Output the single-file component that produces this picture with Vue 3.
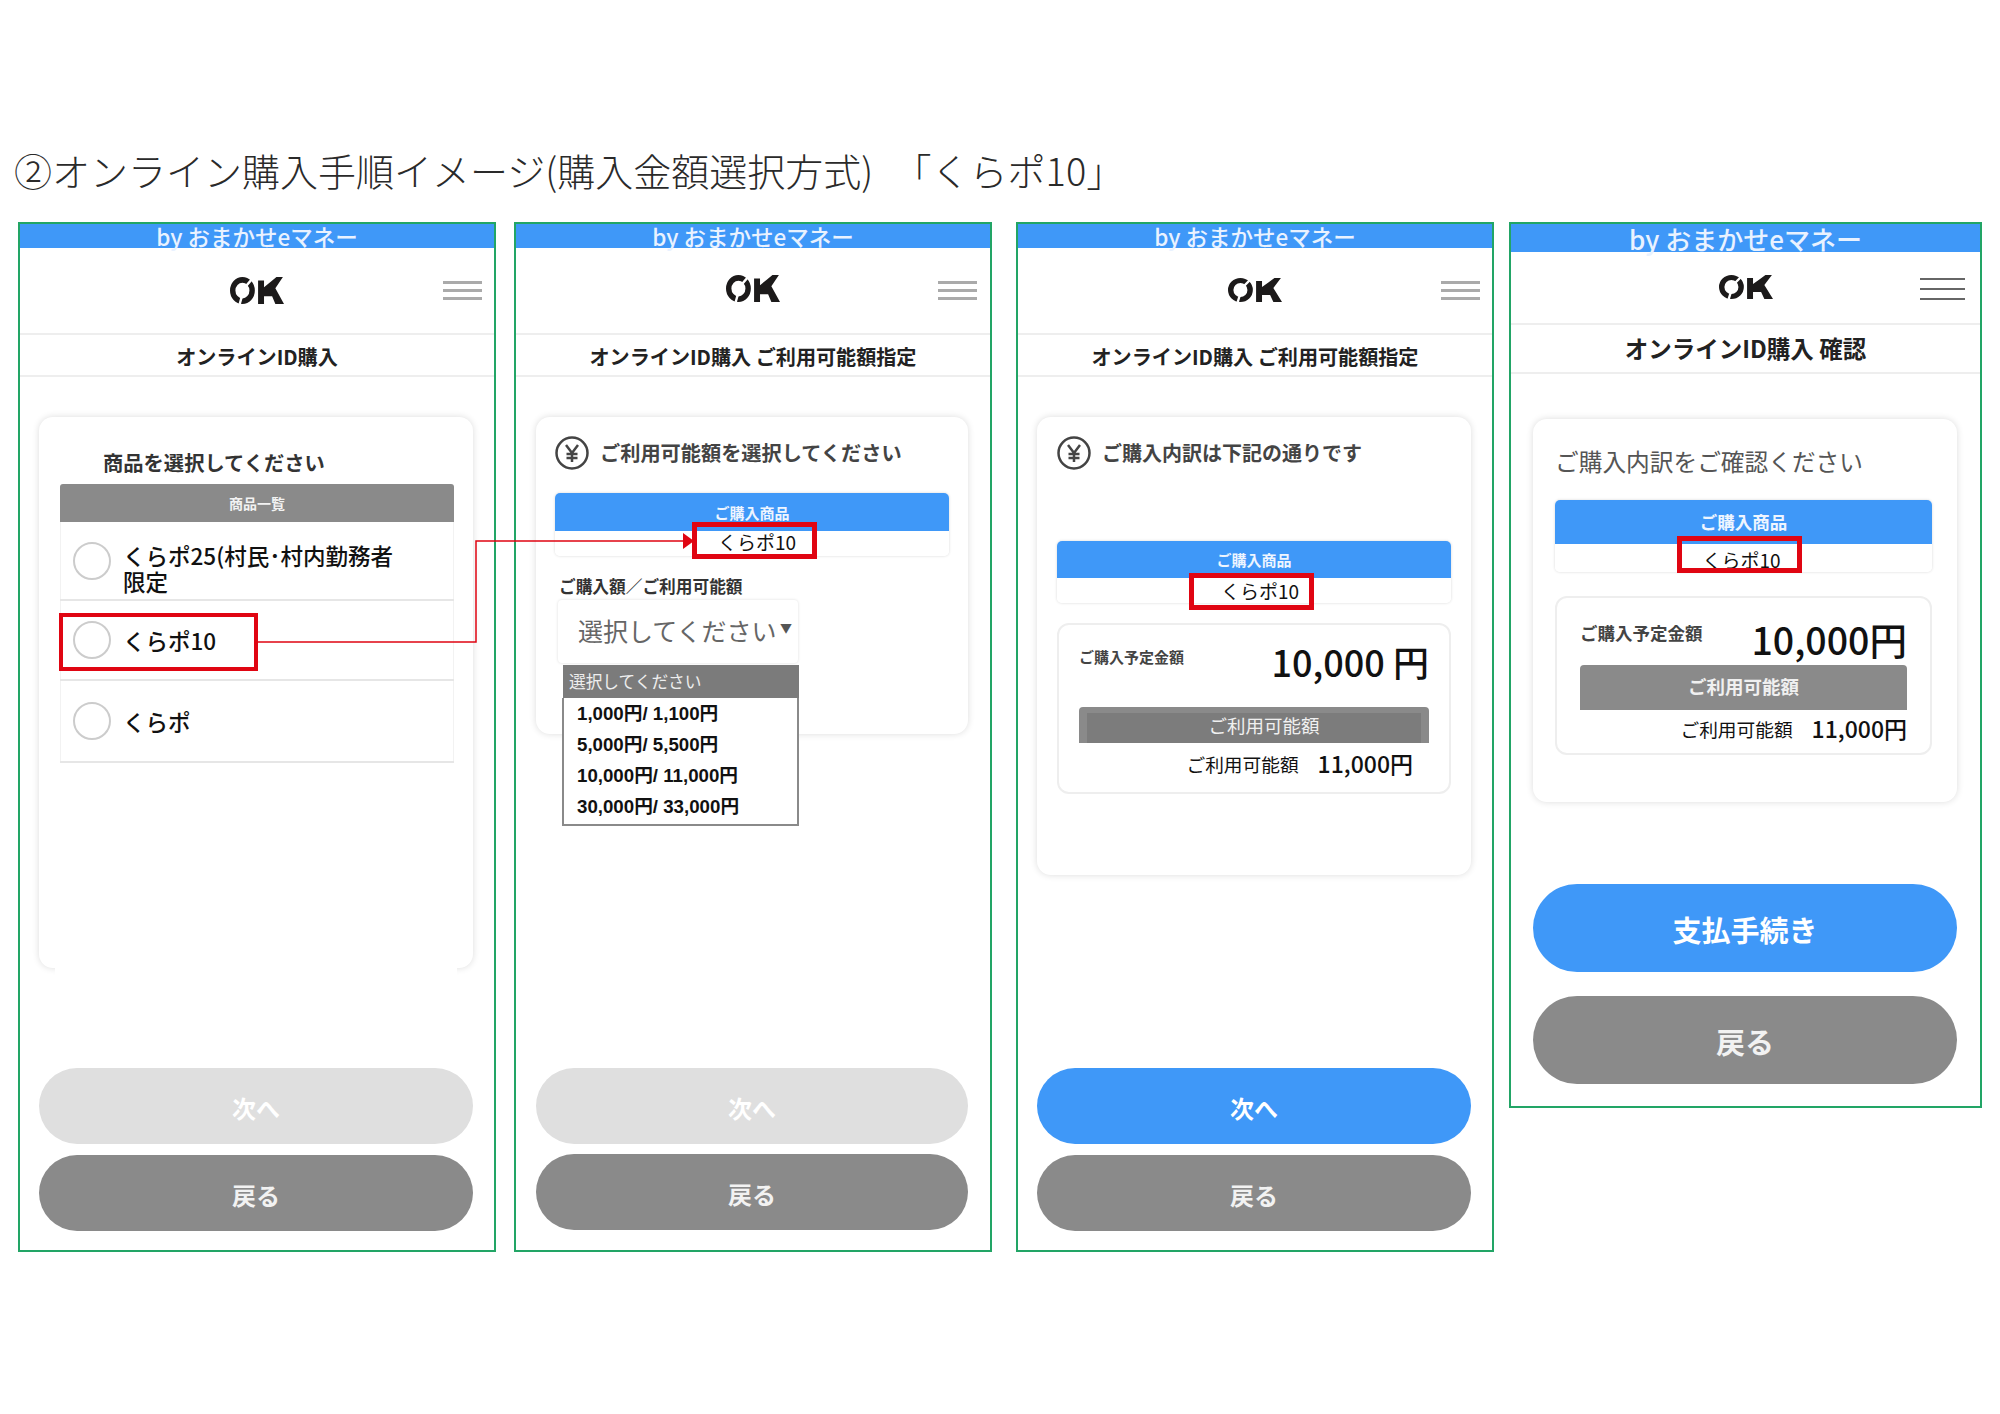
<script setup>
const products = [
  { id: 'a', lines: ['くらポ25(村民･村内勤務者', '限定'], cls: 'tall' },
  { id: 'b', lines: ['くらポ10'], cls: 'picked' },
  { id: 'c', lines: ['くらポ'], cls: '' },
]
const options = ['1,000円/ 1,100円', '5,000円/ 5,500円', '10,000円/ 11,000円', '30,000円/ 33,000円']
</script>

<template>
  <main class="page">
    <h1 class="headline">②オンライン購入手順イメージ(購入金額選択方式) 「くらポ10」</h1>

    <div class="screens">
      <!-- 1 -->
      <section class="phone p1">
        <div class="band">by おまかせeマネー</div>
        <header class="head">
          <svg class="logo" viewBox="0 0 50 24" preserveAspectRatio="none"><ellipse class="logo-ring" cx="11.500" cy="12" rx="9" ry="9.500" /><path class="logo-gap" d="M14 9L22 0M11 17L9 24" /><path class="logo-k" d="M26 24V3h5.500v6L38 4l5-4h6l-7 10 8 14h-8l-3-7h-7.500v7z" /></svg>
          <span class="burger"><i></i><i></i><i></i></span>
        </header>
        <div class="bar">オンラインID購入</div>
        <div class="body">
          <div class="card card-list">
            <h2 class="pick-title">商品を選択してください</h2>
            <div class="list-head">商品一覧</div>
            <div v-for="p in products" :key="p.id" class="row" :class="p.cls">
              <span class="radio"></span>
              <span class="row-text"><span v-for="l in p.lines" :key="l" class="row-line">{{ l }}</span></span>
            </div>
          </div>
          <div class="actions">
            <button class="btn off">次へ</button>
            <button class="btn back">戻る</button>
          </div>
        </div>
      </section>

      <!-- 2 -->
      <section class="phone p2">
        <div class="band">by おまかせeマネー</div>
        <header class="head">
          <svg class="logo" viewBox="0 0 50 24" preserveAspectRatio="none"><ellipse class="logo-ring" cx="11.500" cy="12" rx="9" ry="9.500" /><path class="logo-gap" d="M14 9L22 0M11 17L9 24" /><path class="logo-k" d="M26 24V3h5.500v6L38 4l5-4h6l-7 10 8 14h-8l-3-7h-7.500v7z" /></svg>
          <span class="burger"><i></i><i></i><i></i></span>
        </header>
        <div class="bar">オンラインID購入 ご利用可能額指定</div>
        <div class="body">
          <div class="card card-select">
            <div class="lead">
              <svg class="yen" viewBox="0 0 34 34"><circle cx="17" cy="17" r="15.500" /><path d="M11 9l6 8 6-8M17 17v9M11.500 18h11M11.500 22h11" /></svg>
              <h2>ご利用可能額を選択してください</h2>
            </div>
            <div class="item item-select">
              <div class="item-head">ご購入商品</div>
              <div class="item-value"><span class="red-box"></span>くらポ10</div>
            </div>
            <div class="field-label">ご購入額／ご利用可能額</div>
            <div class="select">選択してください<span class="caret">▼</span></div>
            <div class="menu">
              <div class="menu-head">選択してください</div>
              <div class="menu-items">
                <div v-for="o in options" :key="o" class="menu-item">{{ o }}</div>
              </div>
            </div>
          </div>
          <div class="actions">
            <button class="btn off">次へ</button>
            <button class="btn back">戻る</button>
          </div>
        </div>
      </section>

      <!-- 3 -->
      <section class="phone p3">
        <div class="band">by おまかせeマネー</div>
        <header class="head">
          <svg class="logo" viewBox="0 0 50 24" preserveAspectRatio="none"><ellipse class="logo-ring" cx="11.500" cy="12" rx="9" ry="9.500" /><path class="logo-gap" d="M14 9L22 0M11 17L9 24" /><path class="logo-k" d="M26 24V3h5.500v6L38 4l5-4h6l-7 10 8 14h-8l-3-7h-7.500v7z" /></svg>
          <span class="burger"><i></i><i></i><i></i></span>
        </header>
        <div class="bar">オンラインID購入 ご利用可能額指定</div>
        <div class="body">
          <div class="card card-summary">
            <div class="lead">
              <svg class="yen" viewBox="0 0 34 34"><circle cx="17" cy="17" r="15.500" /><path d="M11 9l6 8 6-8M17 17v9M11.500 18h11M11.500 22h11" /></svg>
              <h2>ご購入内訳は下記の通りです</h2>
            </div>
            <div class="item">
              <div class="item-head">ご購入商品</div>
              <div class="item-value"><span class="red-box"></span>くらポ10</div>
            </div>
            <div class="amount">
              <div class="amount-top">
                <span class="amount-label">ご購入予定金額</span>
                <span class="amount-num">10,000 円</span>
              </div>
              <div class="avail-head"><span class="avail-inner">ご利用可能額</span></div>
              <div class="avail-row"><span>ご利用可能額</span><b>11,000円</b></div>
            </div>
          </div>
          <div class="actions">
            <button class="btn go">次へ</button>
            <button class="btn back">戻る</button>
          </div>
        </div>
      </section>

      <!-- 4 -->
      <section class="phone p4">
        <div class="band">by おまかせeマネー</div>
        <header class="head">
          <svg class="logo" viewBox="0 0 50 24" preserveAspectRatio="none"><ellipse class="logo-ring" cx="11.500" cy="12" rx="9" ry="9.500" /><path class="logo-gap" d="M14 9L22 0M11 17L9 24" /><path class="logo-k" d="M26 24V3h5.500v6L38 4l5-4h6l-7 10 8 14h-8l-3-7h-7.500v7z" /></svg>
          <span class="burger"><i></i><i></i><i></i></span>
        </header>
        <div class="bar">オンラインID購入 確認</div>
        <div class="body">
          <div class="card card-confirm">
            <h2 class="confirm-title">ご購入内訳をご確認ください</h2>
            <div class="item">
              <div class="item-head">ご購入商品</div>
              <div class="item-value"><span class="red-box"></span>くらポ10</div>
            </div>
            <div class="amount">
              <div class="amount-top">
                <span class="amount-label">ご購入予定金額</span>
                <span class="amount-num">10,000円</span>
              </div>
              <div class="avail-head">ご利用可能額</div>
              <div class="avail-row"><span>ご利用可能額</span><b>11,000円</b></div>
            </div>
          </div>
          <div class="actions">
            <button class="btn go">支払手続き</button>
            <button class="btn back">戻る</button>
          </div>
        </div>
      </section>
    </div>

    <svg class="connector" viewBox="0 0 2000 1414">
      <path class="wire" d="M257 642H476V541H684" />
      <path class="tip" d="M683 533l11 8-11 8z" />
    </svg>
  </main>
</template>

<style>
html, body { background: #fff; }
</style>

<style scoped>
.page {
  position: relative;
  width: 2000px;
  height: 1414px;
  background: #fff;
  font-family: "Noto Sans CJK JP", "Noto Sans", sans-serif;
  color: #222;
  overflow: hidden;
}
.headline {
  margin: 0;
  padding: 142px 0 0 14px;
  height: 222px;
  box-sizing: border-box;
  font-size: 38px;
  line-height: 56px;
  font-weight: 300;
  word-spacing: 12px;
  color: #2a2a2a;
  white-space: nowrap;
}
.screens { display: flex; align-items: flex-start; padding-left: 18px; }

.phone {
  box-sizing: border-box;
  width: 478px;
  height: 1030px;
  border: 2px solid #22a566;
  display: flex;
  flex-direction: column;
  background: #fff;
}
.p2 { margin-left: 18px; }
.p3 { margin-left: 24px; }
.p4 { margin-left: 15px; width: 473px; height: 886px; }

.band {
  height: 24px;
  background: #3f98f8;
  color: #e9f2ff;
  font-size: 22.500px;
  line-height: 24px;
  font-weight: 500;
  text-align: center;
  flex: none;
}
.p4 .band { height: 28px; line-height: 29px; font-size: 26px; }

.head {
  position: relative;
  height: 87px;
  flex: none;
  display: flex;
  align-items: center;
  justify-content: center;
  border-bottom: 2px solid #eee;
  box-sizing: border-box;
}
.p4 .head { height: 73px; }
.logo { width: 54px; height: 27px; margin-top: -1px; }
.p2 .logo { margin-top: -5px; }
.p3 .logo, .p4 .logo { width: 54px; height: 24px; }
.logo-ring { fill: none; stroke: #1c1a1a; stroke-width: 5; }
.logo-gap { fill: none; stroke: #fff; stroke-width: 2.200; }
.logo-k { fill: #1c1a1a; }

.burger {
  position: absolute;
  right: 12px;
  top: 33px;
  width: 39px;
  display: flex;
  flex-direction: column;
  gap: 5px;
}
.burger i { display: block; height: 3px; background: #aaa; }
.p2 .burger { right: 13px; }
.p4 .burger { width: 45px; right: 15px; top: 26px; gap: 8px; }
.p4 .burger i { height: 2px; background: #666; }

.bar {
  height: 42px;
  flex: none;
  box-sizing: border-box;
  border-bottom: 2px solid #eee;
  text-align: center;
  font-size: 20.100px;
  line-height: 44px;
  font-weight: 700;
  color: #222;
  white-space: nowrap;
}
.p4 .bar { height: 49px; font-size: 23.500px; line-height: 46px; }

.body {
  flex: 1;
  display: flex;
  flex-direction: column;
  padding: 40px 21px 19px 19px;
  min-height: 0;
}
.p2 .body { padding: 40px 22px 20px 20px; }
.p4 .body { padding: 45px 23px 22px 22px; }

.card {
  position: relative;
  box-sizing: border-box;
  background: #fff;
  border-radius: 14px;
  box-shadow: 0 0 7px rgba(0, 0, 0, 0.14);
  flex: none;
}

/* screen 1 */
.card-list { height: 551px; padding: 28px 19px 0 21px; }
.card-list::after {
  content: "";
  position: absolute;
  left: 16px;
  right: 16px;
  bottom: -10px;
  height: 12px;
  background: #fff;
}
.pick-title {
  margin: 0 0 5px 43px;
  font-size: 20.300px;
  line-height: 34px;
  font-weight: 700;
  color: #333;
}
.list-head {
  height: 38px;
  background: #8a8a8a;
  border-radius: 3px 3px 0 0;
  color: #f2f2f2;
  text-align: center;
  font-size: 14px;
  line-height: 38px;
  font-weight: 700;
}
.row {
  position: relative;
  box-sizing: border-box;
  height: 80px;
  display: flex;
  align-items: center;
  gap: 12px;
  padding-left: 13px;
  border-bottom: 2px solid #e6e6e6;
  box-shadow: inset 1px 0 0 #f2f2f2, inset -1px 0 0 #f2f2f2;
}
.row.tall { height: 79px; }
.row.tall .row-text { margin-top: 15px; }
.row:last-child { height: 82px; }
.radio {
  box-sizing: border-box;
  width: 38px;
  height: 38px;
  border: 2px solid #ccc;
  border-radius: 50%;
  flex: none;
}
.row-text { display: flex; flex-direction: column; }
.row-line { font-size: 22.500px; line-height: 26px; font-weight: 500; color: #111; white-space: nowrap; }
.row.picked::after {
  content: "";
  position: absolute;
  left: -1px;
  top: 12px;
  width: 199px;
  height: 58px;
  box-sizing: border-box;
  border: 4px solid #e00512;
}

/* lead lines with yen icon */
.lead { display: flex; align-items: center; gap: 11px; }
.lead h2 { margin: 0; font-size: 20.200px; line-height: 34px; font-weight: 700; color: #444; white-space: nowrap; }
.yen { width: 34px; height: 34px; flex: none; }
.yen circle { fill: none; stroke: #444; stroke-width: 2.500; }
.yen path { fill: none; stroke: #444; stroke-width: 2.500; }

/* purchased item block */
.item {
  position: relative;
  border-radius: 5px;
  box-shadow: 0 0 3px rgba(0, 0, 0, 0.16);
}
.item-head {
  height: 38px;
  border-radius: 5px 5px 0 0;
  background: #3f98f8;
  color: #eef5ff;
  text-align: center;
  font-size: 15px;
  line-height: 40px;
  font-weight: 700;
}
.item-value {
  position: relative;
  height: 25px;
  background: #fff;
  border-radius: 0 0 5px 5px;
  text-align: center;
  font-size: 19px;
  line-height: 25px;
  color: #111;
}
.red-box {
  position: absolute;
  left: 50%;
  top: -8px;
  width: 125px;
  height: 37px;
  margin-left: -63px;
  box-sizing: border-box;
  border: 5px solid #e00512;
}

/* screen 2 */
.card-select { height: 317px; padding: 19px 19px 0; }
.item-select { margin-top: 23px; }
.item-select .item-value { padding-left: 10px; line-height: 22px; }
.item-select .red-box { margin-left: -60px; top: -9px; }
.field-label { margin: 19px 0 0 4px; font-size: 16.700px; line-height: 22px; font-weight: 700; color: #333; }
.select {
  position: relative;
  box-sizing: border-box;
  width: 240px;
  height: 63px;
  margin: 3px 0 0 3px;
  padding-left: 20px;
  border-radius: 4px;
  box-shadow: 0 0 3px rgba(0, 0, 0, 0.14);
  color: #666;
  font-size: 25px;
  line-height: 60px;
  white-space: nowrap;
}
.caret { position: absolute; right: 6px; top: 0; font-size: 12px; line-height: 56px; color: #555; }
.menu { position: absolute; left: 26px; top: 248px; width: 237px; z-index: 2; }
.menu-head {
  height: 33px;
  margin-left: 1px;
  background: #7b7b7b;
  color: #eee;
  font-size: 16.700px;
  line-height: 33px;
  padding-left: 6px;
}
.menu-items {
  box-sizing: border-box;
  height: 128px;
  background: #fff;
  border: 2px solid #8a8a8a;
  border-top: 0;
}
.menu-item {
  height: 31px;
  padding-left: 13px;
  font-family: "Liberation Sans", "Noto Sans CJK JP", sans-serif;
  font-size: 18.700px;
  line-height: 31px;
  font-weight: 700;
  color: #111;
  white-space: nowrap;
}

/* screens 3 and 4 */
.card-summary { height: 458px; padding: 19px 20px 0; }
.p3 .lead h2 { font-size: 20px; }
.p3 .item { margin-top: 71px; }
.p3 .item-head { height: 37px; line-height: 38px; }
.p3 .item-value { padding-left: 12px; }
.p3 .red-box { margin-left: -65px; top: -5px; height: 37px; }
.amount {
  box-sizing: border-box;
  margin-top: 20px;
  border: 2px solid #eee;
  border-radius: 12px;
  padding: 0 20px;
}
.p3 .amount { height: 171px; padding: 0 20px; }
.amount-top { display: flex; align-items: flex-start; justify-content: space-between; height: 82px; }
.amount-label { margin-top: 18px; font-size: 15px; line-height: 28px; font-weight: 700; color: #444; }
.amount-num {
  margin-top: 9px;
  font-size: 36px;
  line-height: 54px;
  font-weight: 500;
  color: #111;
  white-space: nowrap;
}
.avail-head {
  height: 36px;
  margin-top: 0;
  box-sizing: border-box;
  padding: 8px 8px 0;
  background: #8a8a8a;
  border-radius: 4px 4px 0 0;
  color: #f0f0f0;
  text-align: center;
  font-size: 18.500px;
  line-height: 24px;
}
.avail-inner { display: block; margin: -2px 0 0; background: #7c7c7c; height: 30px; padding-left: 6%; }
.avail-row {
  display: flex;
  justify-content: flex-end;
  align-items: center;
  gap: 19px;
  height: 40px;
  padding-right: 16px;
  font-size: 18.700px;
  color: #111;
}
.avail-row b { font-size: 23px; font-weight: 500; }

.card-confirm { height: 383px; padding: 24px 25px 0 22px; }
.confirm-title { margin: 0 0 21px 0; font-size: 23.700px; line-height: 36px; font-weight: 400; color: #555; white-space: nowrap; }
.p4 .item-head { height: 44px; line-height: 44px; font-size: 17.500px; }
.p4 .item-value { height: 28px; line-height: 31px; padding-right: 4px; }
.p4 .red-box { top: -8px; height: 37px; margin-left: -67px; }
.p4 .amount { margin-top: 24px; height: 159px; padding: 0 23px; }
.p4 .amount-top { height: 67px; }
.p4 .amount-label { margin-top: 21px; font-size: 17.500px; }
.p4 .amount-num { margin-top: 14px; font-size: 37.500px; }
.p4 .avail-head { height: 45px; padding-top: 9px; font-weight: 700; font-size: 18.500px; }
.p4 .avail-row { height: 36px; padding-right: 0; }

/* buttons */
.actions { margin-top: auto; display: flex; flex-direction: column; gap: 11px; }
.p2 .actions { gap: 10px; }
.btn {
  display: block;
  width: 100%;
  height: 76px;
  border: 0;
  border-radius: 38px;
  padding: 2px 0 0;
  color: #fff;
  font-family: inherit;
  font-size: 24px;
  font-weight: 700;
}
.off { background: #dfdfdf; }
.back { background: #8a8a8a; color: #f2f2f2; }
.go { background: #3f98f8; }
.p4 .actions { gap: 24px; }
.p4 .btn { height: 88px; border-radius: 44px; font-size: 29px; }

.connector { position: absolute; left: 0; top: 0; width: 2000px; height: 1414px; pointer-events: none; }
.wire { fill: none; stroke: #e00512; stroke-width: 1.500; }
.tip { fill: #e00512; }
</style>
